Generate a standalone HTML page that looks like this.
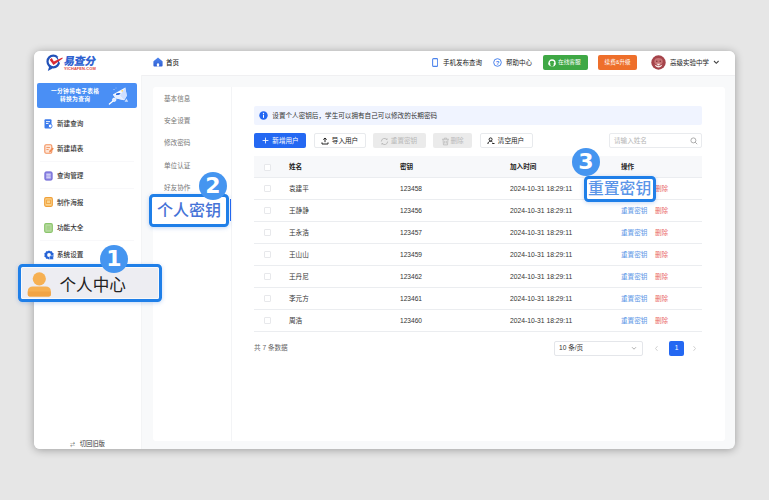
<!DOCTYPE html>
<html lang="zh-CN">
<head>
<meta charset="utf-8">
<title>个人密钥</title>
<style>
*{box-sizing:border-box;margin:0;padding:0}
html,body{width:769px;height:500px;overflow:hidden}
body{background:#e6e6e6;font-family:"Liberation Sans","Noto Sans CJK SC",sans-serif;color:#333;position:relative;-webkit-text-size-adjust:none}
.abs{position:absolute}
.win{position:absolute;left:34px;top:50.500px;width:701px;height:398.500px;background:#f8f9fa;border-radius:6px;overflow:hidden;box-shadow:0 1px 8px rgba(0,0,0,.32)}
.inner{position:absolute;left:0;top:-.5px;width:701px;height:400px}
.hdr{position:absolute;left:0;top:0;width:701px;height:26px;background:#fff;border-bottom:1px solid #f0f0f2}
.side{position:absolute;left:0;top:25px;width:106.500px;height:376px;background:#fff;box-shadow:1px 0 0 #f3f4f5}
.card{position:absolute;left:118.600px;top:36.500px;width:572px;height:354.500px;background:#fff;border-radius:3px}
.vline{position:absolute;left:197px;top:36.500px;width:1px;height:354.500px;background:#f3f4f6}
.t{position:absolute;white-space:nowrap;line-height:1;font-size:6.6px;color:#333}
.m{font-size:6.6px;color:#777}
.nav{font-size:6.6px;color:#333;font-weight:500}
.sep{position:absolute;left:6px;width:94px;height:1px;background:#f8f8fa}
.btn{position:absolute;top:83.400px;height:15px;border-radius:2px;font-size:6.6px;line-height:15.600px;text-align:center;white-space:nowrap}
.row{position:absolute;left:220px;width:448px;height:22px;border-bottom:1px solid #ebedf0}
.row .t{top:8px}
.cb{position:absolute;left:10px;top:7px;width:7px;height:7px;border:1px solid #e7e8eb;border-radius:1px;background:#fff}
.call{position:absolute;border:3.500px solid #1f7fe8;border-radius:4.500px;box-shadow:0 1px 4px rgba(40,110,220,.28),inset 0 0 0 .8px rgba(255,255,255,.85)}
.badge{position:absolute;width:28px;height:28px;border-radius:50%;background:#4595f0;color:#fff;font-weight:bold;font-size:22px;line-height:28px;text-align:center;font-family:"DejaVu Sans","Liberation Sans",sans-serif}
</style>
</head>
<body>
<div class="win"><div class="inner">
  <div class="hdr"></div>
  <div class="side"></div>
  <div class="card"></div>
  <div class="vline"></div>

  <!-- header -->
  <svg class="abs" style="left:10px;top:2px" width="24" height="22" viewBox="0 0 24 22">
    <circle cx="9.300" cy="9.500" r="5.800" fill="none" stroke="#2151b8" stroke-width="2.200"/>
    <path d="M5.200 14.600L3.800 19l4.800-2.400z" fill="#2151b8"/>
    <path d="M13.500 4.500L20 4.500 15.500 11z" fill="#fff"/>
    <path d="M5.600 7.800L7.800 6.100l2 3.300L18.400 5.600l.3 1L9.500 12.900z" fill="#d92b35"/>
  </svg>
  <div class="t" style="left:29px;top:5.700px;font-size:11px;font-weight:900;color:#2f62d0;letter-spacing:-.5px;transform:skewX(-10deg);transform-origin:0 100%">易查分</div>
  <div class="t" style="left:30px;top:17.400px;font-size:4px;color:#e0453c;font-weight:bold;letter-spacing:.08px">YICHAFEN.COM</div>

  <svg class="abs" style="left:118.700px;top:7px" width="10" height="10" viewBox="0 0 10 10"><defs><linearGradient id="hg" x1="0" y1="0" x2="0" y2="1"><stop offset="0" stop-color="#4f86f0"/><stop offset="1" stop-color="#2f5fd2"/></linearGradient></defs><path d="M5 .5L9.200 4q.4.300.4.800V8.600q0 1-1 1H1.400q-1 0-1-1V4.800q0-.5.400-.8z" fill="url(#hg)"/><path d="M3.900 9.600V7.300q0-1.100 1.100-1.100t1.100 1.100V9.600z" fill="#fff"/></svg>
  <div class="t" style="left:132px;top:9.600px;font-size:6.5px;font-weight:500;color:#222">首页</div>

  <svg class="abs" style="left:397.800px;top:8.300px" width="6.300" height="9" viewBox="0 0 7 10"><rect x=".7" y=".7" width="5.600" height="8.600" rx="1.100" fill="#fff" stroke="#4a82ec" stroke-width="1.150"/></svg>
  <div class="t" style="left:409px;top:9.500px;font-size:6.5px;color:#222">手机发布查询</div>
  <svg class="abs" style="left:459px;top:8px" width="9" height="9" viewBox="0 0 9 9"><circle cx="4.5" cy="4.5" r="3.8" fill="#fff" stroke="#3a78ea" stroke-width=".9"/><text x="4.5" y="6.6" font-size="6" text-anchor="middle" fill="#3a78ea" font-family="Liberation Sans, sans-serif" font-weight="bold">?</text></svg>
  <div class="t" style="left:472px;top:9.500px;font-size:6.5px;color:#222">帮助中心</div>

  <div class="abs" style="left:509px;top:5px;width:45px;height:15px;background:#3fa845;border-radius:2px"></div>
  <svg class="abs" style="left:514px;top:8.5px" width="8" height="8" viewBox="0 0 8 8"><circle cx="4" cy="4" r="3" fill="none" stroke="#fff" stroke-width="1.3"/><rect x="2.6" y="4" width="2.8" height="3.6" fill="#3fa845"/><rect x=".6" y="3.6" width="1.6" height="2.6" rx=".6" fill="#fff"/><rect x="5.8" y="3.6" width="1.6" height="2.6" rx=".6" fill="#fff"/></svg>
  <div class="t" style="left:524px;top:9.700px;font-size:5.700px;color:#fff">在线客服</div>

  <div class="abs" style="left:564px;top:5px;width:39px;height:15px;background:#ee6f2b;border-radius:2px"></div>
  <div class="t" style="left:570.600px;top:9.800px;font-size:5.550px;color:#fff">续费&amp;升级</div>

  <svg class="abs" style="left:617.400px;top:4.900px" width="15" height="15" viewBox="0 0 15 15"><circle cx="7.500" cy="7.500" r="7.200" fill="#a5434a"/><ellipse cx="7.500" cy="6.400" rx="4.200" ry="3.400" fill="#c77476"/><circle cx="5.800" cy="6.200" r=".7" fill="#7a2a30"/><circle cx="9.200" cy="6.200" r=".7" fill="#7a2a30"/><path d="M3.600 9.600c1 .9 2.400 1.300 3.900 1.300s2.900-.4 3.900-1.300c-.6 2-2.100 3-3.900 3s-3.300-1-3.900-3z" fill="#f6ebe8"/><path d="M5.600 8.800h3.800l-1.900 1.900z" fill="#f6ebe8"/></svg>
  <div class="t" style="left:636px;top:9.500px;font-size:6.5px;color:#222">高级实验中学</div>
  <svg class="abs" style="left:678.500px;top:10.300px" width="7" height="5" viewBox="0 0 7 5"><path d="M1 1l2.300 2.300L5.600 1" fill="none" stroke="#444" stroke-width="1.100"/></svg>

  <!-- sidebar -->
  <div class="abs" style="left:3px;top:33.400px;width:100px;height:25px;background:#4a8ff5;border-radius:2px"></div>
  <div class="t" style="left:17px;top:39px;font-size:5.750px;color:#fff;font-weight:bold;letter-spacing:.3px">一分钟将电子表格</div>
  <div class="t" style="left:26px;top:47.300px;font-size:5.750px;color:#fff;font-weight:bold;letter-spacing:.3px">转换为查询</div>
  <svg class="abs" style="left:74px;top:35.400px" width="24" height="22" viewBox="0 0 24 22"><path d="M17.300 2.600L4.800 9.600l2.800 3.600 8.600 2 2.600-4.400z" fill="#fff" opacity=".95"/><path d="M17.300 2.600L12 10.500l4.200 4.700 2.600-4.400z" fill="#cfe0ff"/><path d="M4.800 9.600l2.800 3.600 8.600 2L12 10.500z" fill="#e4eeff"/><ellipse cx="10.200" cy="9" rx="2.400" ry=".9" fill="#2a6be0" transform="rotate(-12 10.200 9)"/><circle cx="14.200" cy="5.800" r=".9" fill="#ffd66b"/><circle cx="6.200" cy="14.800" r="1.700" fill="#dfeaff" stroke="#fff" stroke-width=".8"/><path d="M4.800 16.200L1.400 19" stroke="#fff" stroke-width="1.300" stroke-linecap="round"/><path d="M16.600 16.800l1.800-3.400 1.800 3.400z" fill="#cddfff"/><circle cx="6" cy="4.600" r=".5" fill="#dce9ff"/><circle cx="8" cy="3" r=".4" fill="#dce9ff"/></svg>

  <svg class="abs" style="left:10px;top:69px" width="9" height="10" viewBox="0 0 9 10"><rect x=".5" y=".3" width="7" height="9.200" rx="1" fill="#3b7bec"/><rect x="2" y="2.200" width="4" height=".9" fill="#fff"/><rect x="2" y="4" width="2.500" height=".9" fill="#fff"/><circle cx="6.200" cy="7" r="1.900" fill="#fff" stroke="#2f6fe8" stroke-width=".8"/></svg>
  <div class="t nav" style="left:23px;top:71px">新建查询</div>
  <svg class="abs" style="left:10px;top:93.500px" width="10" height="10" viewBox="0 0 10 10"><rect x=".8" y=".8" width="7" height="8.400" rx="1.200" fill="#fde6d8" stroke="#f3925e" stroke-width="1.100"/><rect x="2.400" y="3" width="3.500" height=".9" fill="#f3925e"/><rect x="2.400" y="5" width="2.200" height=".9" fill="#f3925e"/><path d="M5 8.500l.4-1.800L8.600 3.500l1.200 1.200L6.700 8z" fill="#f08a52"/></svg>
  <div class="t nav" style="left:23px;top:95.500px">新建填表</div>
  <div class="sep" style="top:111px"></div>
  <svg class="abs" style="left:10px;top:120.800px" width="9" height="10" viewBox="0 0 9 10"><rect x=".9" y=".9" width="7.200" height="8.200" rx="1.200" fill="#8e88e2" stroke="#6f67d6" stroke-width="1"/><rect x="2.300" y="2.700" width="4.400" height="1" fill="#ecebfd"/><rect x="2.300" y="4.500" width="4.400" height="1" fill="#ecebfd"/><rect x="2.300" y="6.300" width="4.400" height="1" fill="#ecebfd"/></svg>
  <div class="t nav" style="left:23px;top:122.800px">查询管理</div>
  <div class="sep" style="top:138px"></div>
  <svg class="abs" style="left:10px;top:147.300px" width="9" height="10" viewBox="0 0 9 10"><rect x=".7" y=".7" width="7.600" height="8.600" rx="1.200" fill="#fbd38c" stroke="#f0a03a" stroke-width="1.200"/><rect x="2.600" y="3" width="3.800" height="3.600" fill="none" stroke="#f0a03a" stroke-width=".8"/></svg>
  <div class="t nav" style="left:23px;top:149.800px">制作海报</div>
  <svg class="abs" style="left:10px;top:172.800px" width="9" height="10" viewBox="0 0 9 10"><rect x=".7" y=".7" width="7.600" height="8.600" rx="1.200" fill="#b7dba0" stroke="#8cc56d" stroke-width="1.200"/><rect x="2.600" y="2.800" width="3.800" height="4.400" fill="#a6d18a"/></svg>
  <div class="t nav" style="left:23px;top:174.800px">功能大全</div>
  <div class="sep" style="top:190px"></div>
  <svg class="abs" style="left:10px;top:200.300px" width="10" height="10" viewBox="0 0 10 10"><path d="M5 .4l1.300.9 1.600-.1.600 1.500 1.300.9-.5 1.400.5 1.500-1.300.9-.6 1.500-1.600-.1L5 9.600l-1.300-.9-1.600.1-.6-1.500L.2 6.500.7 5 .2 3.600l1.300-.9.600-1.500 1.600.1z" fill="#2563d6"/><circle cx="5" cy="5" r="1.900" fill="#fff"/><rect x="5.600" y="5.800" width="3.800" height="3.600" rx=".6" fill="#2563d6" stroke="#fff" stroke-width=".5"/></svg>
  <div class="t nav" style="left:23px;top:202.300px">系统设置</div>

  <div class="t" style="left:36px;top:391.500px;font-size:5px;color:#444">⇄</div>
  <div class="t" style="left:45.700px;top:390.800px;font-size:6.300px;color:#333">切回旧版</div>

  <!-- secondary menu -->
  <div class="t m" style="left:130px;top:45.5px">基本信息</div>
  <div class="t m" style="left:130px;top:67.5px">安全设置</div>
  <div class="t m" style="left:130px;top:90.0px">修改密码</div>
  <div class="t m" style="left:130px;top:112.5px">单位认证</div>
  <div class="t m" style="left:130px;top:135.0px">好友协作</div>
  <div class="abs" style="left:195.800px;top:149px;width:1.400px;height:22px;background:#2468f2"></div>

  <!-- content -->
  <div class="abs" style="left:220px;top:56px;width:448px;height:19px;background:#f0f4ff;border-radius:2px"></div>
  <svg class="abs" style="left:225.200px;top:61.300px" width="9" height="9" viewBox="0 0 9 9"><circle cx="4.500" cy="4.500" r="4.200" fill="#2468f2"/><rect x="4" y="3.800" width="1" height="3" fill="#fff"/><circle cx="4.500" cy="2.500" r=".65" fill="#fff"/></svg>
  <div class="t" style="left:238.300px;top:62.600px;font-size:6.6px;color:#333">设置个人密钥后，学生可以拥有自己可以修改的长期密码</div>

  <div class="btn" style="left:220px;width:52px;background:#2468f2;color:#fff;text-align:left;padding-left:18.300px">新增用户</div>
  <svg class="abs" style="left:227.800px;top:87.200px" width="7" height="7" viewBox="0 0 7 7"><path d="M3.500 .6v5.800M.6 3.500h5.800" stroke="#fff" stroke-width=".85"/></svg>
  <div class="btn" style="left:280px;width:52px;background:#fff;border:1px solid #e8eaed;color:#222;line-height:13.600px;padding-left:10px">导入用户</div>
  <svg class="abs" style="left:287px;top:87px" width="8" height="8" viewBox="0 0 8 8"><path d="M4 5.200V1M2.300 2.600L4 1l1.700 1.600M1 5.400V7h6V5.400" fill="none" stroke="#222" stroke-width="1"/></svg>
  <div class="btn" style="left:339px;width:53px;background:#ebebeb;color:#b9b9b9;padding-left:9px">重置密钥</div>
  <svg class="abs" style="left:345.800px;top:86.800px" width="9" height="9" viewBox="0 0 8 8"><path d="M1.200 4a2.800 2.800 0 0 1 5-1.700M6.800 4a2.800 2.800 0 0 1-5 1.700" fill="none" stroke="#b9b9b9" stroke-width=".8"/><path d="M6.600.8v1.800H4.800zM1.400 7.200V5.400h1.800z" fill="#b9b9b9"/></svg>
  <div class="btn" style="left:399px;width:39px;background:#ebebeb;color:#b9b9b9;padding-left:9px">删除</div>
  <svg class="abs" style="left:406.500px;top:86.600px" width="9" height="9" viewBox="0 0 8 8"><path d="M1 2h6M3 2V1h2v1M1.800 2l.4 5h3.600l.4-5M3.300 3.400v2.400M4.700 3.400v2.400" fill="none" stroke="#b9b9b9" stroke-width=".7"/></svg>
  <div class="btn" style="left:446px;width:53px;background:#fff;border:1px solid #e8eaed;color:#222;line-height:13.600px;padding-left:9px">清空用户</div>
  <svg class="abs" style="left:453px;top:87px" width="8" height="8" viewBox="0 0 8 8"><circle cx="3.600" cy="2.400" r="1.500" fill="none" stroke="#222" stroke-width="1"/><path d="M.9 7c0-1.800 1.200-2.700 2.700-2.700 .8 0 1.400.2 1.900.7" fill="none" stroke="#222" stroke-width="1"/><path d="M5.200 6.500h2.300" stroke="#222" stroke-width="1"/></svg>

  <div class="abs" style="left:575px;top:83.400px;width:93px;height:15px;background:#fff;border:1px solid #e9ebee;border-radius:2px"></div>
  <div class="t" style="left:580px;top:88px;font-size:6.6px;color:#b5b5b5">请输入姓名</div>
  <svg class="abs" style="left:656px;top:87px" width="8" height="8" viewBox="0 0 8 8"><circle cx="3.400" cy="3.400" r="2.500" fill="none" stroke="#9a9a9a" stroke-width=".8"/><path d="M5.200 5.200L7.200 7.200" stroke="#9a9a9a" stroke-width=".8"/></svg>

  <!-- table -->
  <div class="row" style="top:106px;height:22px;background:#f7f8fa;border-bottom:1px solid #ebedf0">
    <div class="cb" style="top:8px"></div>
    <div class="t" style="left:35px;top:8px;font-weight:bold;color:#222">姓名</div>
    <div class="t" style="left:146px;top:8px;font-weight:bold;color:#222">密钥</div>
    <div class="t" style="left:256px;top:8px;font-weight:bold;color:#222">加入时间</div>
    <div class="t" style="left:367px;top:8px;font-weight:bold;color:#222">操作</div>
  </div>
  <div class="row" style="top:128px"><div class="cb"></div><div class="t" style="left:35px">袁建平</div><div class="t" style="left:146px">123458</div><div class="t" style="left:256px;font-size:6.750px">2024-10-31 18:29:11</div><div class="t" style="left:367px;color:#5a96e6">重置密钥</div><div class="t" style="left:401px;color:#ea6b6a">删除</div></div>
  <div class="row" style="top:150px"><div class="cb"></div><div class="t" style="left:35px">王静静</div><div class="t" style="left:146px">123456</div><div class="t" style="left:256px;font-size:6.750px">2024-10-31 18:29:11</div><div class="t" style="left:367px;color:#5a96e6">重置密钥</div><div class="t" style="left:401px;color:#ea6b6a">删除</div></div>
  <div class="row" style="top:172px"><div class="cb"></div><div class="t" style="left:35px">王永浩</div><div class="t" style="left:146px">123457</div><div class="t" style="left:256px;font-size:6.750px">2024-10-31 18:29:11</div><div class="t" style="left:367px;color:#5a96e6">重置密钥</div><div class="t" style="left:401px;color:#ea6b6a">删除</div></div>
  <div class="row" style="top:194px"><div class="cb"></div><div class="t" style="left:35px">王山山</div><div class="t" style="left:146px">123459</div><div class="t" style="left:256px;font-size:6.750px">2024-10-31 18:29:11</div><div class="t" style="left:367px;color:#5a96e6">重置密钥</div><div class="t" style="left:401px;color:#ea6b6a">删除</div></div>
  <div class="row" style="top:216px"><div class="cb"></div><div class="t" style="left:35px">王丹尼</div><div class="t" style="left:146px">123462</div><div class="t" style="left:256px;font-size:6.750px">2024-10-31 18:29:11</div><div class="t" style="left:367px;color:#5a96e6">重置密钥</div><div class="t" style="left:401px;color:#ea6b6a">删除</div></div>
  <div class="row" style="top:238px"><div class="cb"></div><div class="t" style="left:35px">李元方</div><div class="t" style="left:146px">123461</div><div class="t" style="left:256px;font-size:6.750px">2024-10-31 18:29:11</div><div class="t" style="left:367px;color:#5a96e6">重置密钥</div><div class="t" style="left:401px;color:#ea6b6a">删除</div></div>
  <div class="row" style="top:260px"><div class="cb"></div><div class="t" style="left:35px">周浩</div><div class="t" style="left:146px">123460</div><div class="t" style="left:256px;font-size:6.750px">2024-10-31 18:29:11</div><div class="t" style="left:367px;color:#5a96e6">重置密钥</div><div class="t" style="left:401px;color:#ea6b6a">删除</div></div>

  <div class="t" style="left:220px;top:295px;color:#666">共 7 条数据</div>
  <div class="abs" style="left:520px;top:291px;width:89px;height:15px;background:#fff;border:1px solid #e4e6ea;border-radius:2px"></div>
  <div class="t" style="left:525px;top:295px;color:#333">10 条/页</div>
  <svg class="abs" style="left:597px;top:296px" width="6" height="5" viewBox="0 0 6 5"><path d="M1 1.200l2 2 2-2" fill="none" stroke="#9a9a9a" stroke-width=".8"/></svg>
  <svg class="abs" style="left:620px;top:295px" width="5" height="7" viewBox="0 0 5 7"><path d="M3.500 1.200l-2 2.300 2 2.300" fill="none" stroke="#c4c4c4" stroke-width=".8"/></svg>
  <div class="abs" style="left:635px;top:291px;width:15px;height:15px;background:#2468f2;border-radius:2px"></div>
  <div class="t" style="left:640.800px;top:295px;color:#fff">1</div>
  <svg class="abs" style="left:658px;top:295px" width="5" height="7" viewBox="0 0 5 7"><path d="M1.500 1.200l2 2.300-2 2.300" fill="none" stroke="#c4c4c4" stroke-width=".8"/></svg>
</div></div>

<!-- callouts -->
<div class="call" style="left:18px;top:264px;width:144px;height:38px;background:#ededf2"></div>
<svg class="abs" style="left:27px;top:271px" width="25" height="27" viewBox="0 0 25 27"><circle cx="12.300" cy="7.800" r="6.600" fill="#f6b052"/><path d="M.8 23.500v-3.500c0-3 2-4.600 5-4.600h13c3 0 5 1.600 5 4.600v3.500c0 1.200-.8 2-2 2h-19c-1.200 0-2-.8-2-2z" fill="#f6b052"/><path d="M.8 20.500h23v3c0 1.200-.8 2-2 2h-19c-1.200 0-2-.8-2-2z" fill="#f1a445"/></svg>
<div class="t" style="left:59.500px;top:278px;font-size:16.600px;color:#222">个人中心</div>
<div class="badge" style="left:100px;top:245px">1</div>

<div class="call" style="left:148.500px;top:193.500px;width:80.500px;height:33px;background:#fff"></div>
<div class="t" style="left:157px;top:203px;font-size:16px;color:#4673d7;font-weight:500">个人密钥</div>
<div class="badge" style="left:199px;top:172px">2</div>

<div class="call" style="left:584px;top:175.500px;width:71.500px;height:26px;background:#fff"></div>
<div class="t" style="left:588px;top:181px;font-size:15.800px;color:#5a95e8;font-weight:500">重置密钥</div>
<div class="badge" style="left:572px;top:148px">3</div>
</body>
</html>
